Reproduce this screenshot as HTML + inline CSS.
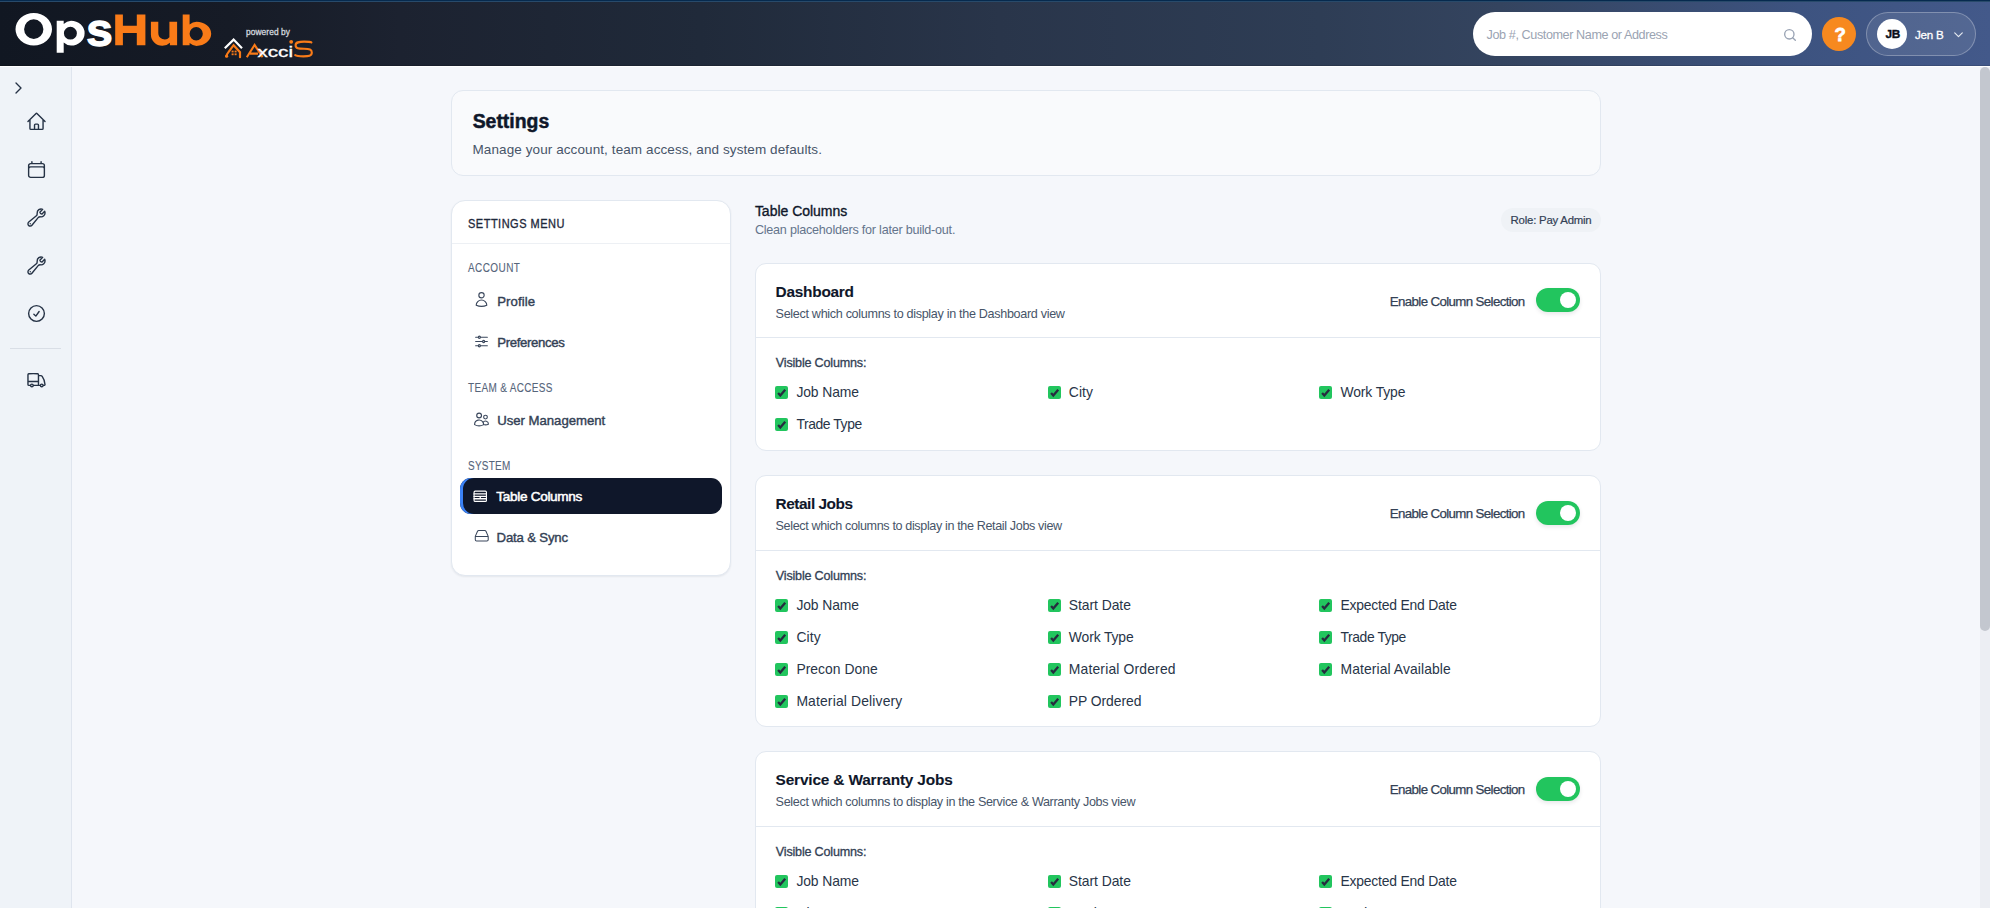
<!DOCTYPE html>
<html><head><meta charset="utf-8"><style>
*{box-sizing:border-box;margin:0;padding:0}
html,body{width:1990px;height:908px;overflow:hidden;background:#f5f7fb;font-family:"Liberation Sans",sans-serif;color:#0f172a}
.abs{position:absolute}
.t{position:absolute;line-height:1;white-space:nowrap}
svg.abs{display:block;overflow:visible}
#hdr{position:absolute;left:0;top:0;width:1990px;height:66px;
 background:linear-gradient(90deg,#111722 0px,#161b26 230px,#1c2230 400px,#202a3a 700px,#29354a 1000px,#2e3d55 1320px,#34445f 1500px,#3d5380 1800px,#43598a 1990px);
 border-bottom:1px solid rgba(0,0,0,.12)}
#tl0{position:absolute;left:0;top:0;width:1990px;height:1px;background:#062a4e}
#tl1{position:absolute;left:0;top:1px;width:1990px;height:1px;background:#284a6a}
#hline{position:absolute;left:0;top:66px;width:1990px;height:1px;background:#ffffff}
#side{position:absolute;left:0;top:67px;width:72px;height:841px;background:#eff3f8;border-right:1px solid #dfe5ee}
#sb{position:absolute;left:1980px;top:67px;width:10px;height:841px;background:#eceef3}
#sbt{position:absolute;left:1980px;top:67px;width:10px;height:564px;background:#c3c7cf;border-radius:5px}
.card{position:absolute;background:#fff;border:1px solid #e2e8f0}
.cb{position:absolute;width:13px;height:13px;background:#22c55e;border-radius:2px}
.cb svg{display:block}
</style></head><body>
<div id="hdr"></div><div id="tl0"></div><div id="tl1"></div><div id="hline"></div>
<svg class="abs" style="left:0;top:0" width="330" height="66" viewBox="0 0 330 66">
<path fill="#ffffff" fill-rule="evenodd" d="M15.5 29.3a18.25 16.3 0 1 0 36.5 0a18.25 16.3 0 1 0 -36.5 0z M24.1 29.15a9.65 9.85 0 1 0 19.3 0a9.65 9.85 0 1 0 -19.3 0z"/>
<path fill="#ffffff" fill-rule="evenodd" d="M56.7 20.7h7v3.2a12 12 0 0 1 7.3 -3.2a13.6 12.45 0 0 1 0 24.9a11 11 0 0 1 -7.3 -3v10.2h-7z M63.9 33.15a6.5 6.35 0 1 0 13 0a6.5 6.35 0 1 0 -13 0z"/>
<text x="86.2" y="45.5" font-family="Liberation Sans" font-weight="bold" font-size="45.5" fill="#ffffff" stroke="#ffffff" stroke-width="1.3" textLength="26.5" lengthAdjust="spacingAndGlyphs">s</text>
<path fill="#f97b18" d="M115.2 14.4h7.7v11.3h13.9v-11.3h8.6v30.9h-8.6v-12.4h-13.9v12.4h-7.7z"/>
<path fill="#f97b18" d="M150.9 21.8h7.4v11.2a6.3 6.5 0 0 0 11.1 4.2v-15.4h7.7v23.5h-7.2v-2.6a10.5 10.5 0 0 1 -7.6 3.1a11.3 11.3 0 0 1 -11.4 -11.3z"/>
<path fill="#f97b18" fill-rule="evenodd" d="M182.7 14.4h6.9v10.2a11.5 11.5 0 0 1 6.9 -2.8a14.7 12.05 0 0 1 0 24.1a11 11 0 0 1 -6.9 -2.8v2.2h-6.9z M189.6 33.85a6.6 6.75 0 1 0 13.2 0a6.6 6.75 0 1 0 -13.2 0z"/>
<text x="246" y="34.5" font-family="Liberation Sans" font-size="8.4" fill="#d0d5dd" stroke="#d0d5dd" stroke-width="0.3" textLength="44" lengthAdjust="spacing">powered by</text>
<path d="M224.8 48.2L233.6 39.6L242 48.2" fill="none" stroke="#ffffff" stroke-width="2.2" stroke-linejoin="miter"/>
<path d="M226.6 56.2C226.6 54.5 227.6 53.2 228.3 52.4L233.6 45.2L240 52.2V57.2" fill="none" stroke="#f97b18" stroke-width="2.2" stroke-linecap="round"/>
<circle cx="226.6" cy="56.2" r="1.6" fill="#f97b18"/>
<rect x="231.6" y="50.6" width="2" height="1.8" fill="#f97b18"/><rect x="234.6" y="50.6" width="2" height="1.8" fill="#f97b18"/>
<rect x="231.6" y="53.4" width="2" height="1.8" fill="#f97b18"/><rect x="234.6" y="53.4" width="2" height="1.8" fill="#f97b18"/>
<path d="M246.8 57.2L254.6 45L262.6 57.2M250 53.6H258" fill="none" stroke="#f97b18" stroke-width="2.1"/>
<text x="257.5" y="57.2" font-family="Liberation Sans" font-size="14.2" fill="#ffffff" stroke="#ffffff" stroke-width="0.3" textLength="35.5" lengthAdjust="spacingAndGlyphs">xcci</text>
<circle cx="291.2" cy="41.8" r="1.9" fill="#f97b18"/>
<path d="M311.4 42.4C310.2 41.6 308.4 41.6 304.2 41.6C298.6 41.6 295.6 42 295.6 45.2C295.6 48.6 298.6 48.8 304 48.8C309.6 48.8 311.8 49.4 311.8 52.6C311.8 56.2 308.6 56.4 303.4 56.4C298.8 56.4 296.6 56.2 295.2 55.2" fill="none" stroke="#f97b18" stroke-width="2.1" stroke-linecap="round"/>
</svg>
<div class="abs" style="left:1473px;top:12px;width:339px;height:44px;background:#fff;border-radius:22px"></div>
<div id="t1" class="t" style="left:1486.60px;top:28.88px;font-size:12.6px;font-weight:normal;color:#9aa3b2;letter-spacing:-0.4px;">Job #, Customer Name or Address</div>
<svg class="abs" style="left:1782px;top:27px" width="16" height="16" viewBox="0 0 24 24" fill="none" stroke="#98a2b3" stroke-width="2" stroke-linecap="round"><circle cx="11" cy="11" r="7"/><path d="M20 20l-4-4"/></svg>
<div class="abs" style="left:1822px;top:17px;width:34px;height:34px;border-radius:50%;background:#f7891f"></div>
<div id="t2" class="t" style="left:1834.50px;top:26.04px;font-size:18.5px;font-weight:bold;color:#ffffff;letter-spacing:0.0px;-webkit-text-stroke:0.8px #fff;">?</div>
<div class="abs" style="left:1866px;top:12px;width:110px;height:44px;border-radius:22px;background:rgba(255,255,255,0.09);border:1px solid rgba(255,255,255,0.28)"></div>
<div class="abs" style="left:1877px;top:19px;width:30px;height:30px;border-radius:50%;background:#fff"></div>
<div id="t3" class="t" style="left:1885.50px;top:29.21px;font-size:11.8px;font-weight:bold;color:#0b0f19;letter-spacing:-0.2px;-webkit-text-stroke:0.4px #0b0f19;">JB</div>
<div id="t4" class="t" style="left:1915.00px;top:28.74px;font-size:11.6px;font-weight:normal;color:#ffffff;letter-spacing:-0.25px;-webkit-text-stroke:0.3px #fff;">Jen B</div>
<svg class="abs" style="left:1952px;top:28px" width="13" height="13" viewBox="0 0 24 24" fill="none" stroke="#e5e9f0" stroke-width="2.2" stroke-linecap="round" stroke-linejoin="round"><path d="M5 9l7 7 7-7"/></svg>
<div id="side"></div>
<svg class="abs" style="left:10px;top:80px" width="16" height="16" viewBox="0 0 24 24" fill="none" stroke="#253245" stroke-width="1.6" stroke-linecap="round" stroke-linejoin="round"><path d="M9 4.5l7.5 7.5L9 19.5" stroke-width="2"/></svg>
<svg class="abs" style="left:25.5px;top:111.0px" width="21" height="21" viewBox="0 0 24 24" fill="none" stroke="#253245" stroke-width="1.6" stroke-linecap="round" stroke-linejoin="round"><path d="M2.25 12l8.954-8.955a1.126 1.126 0 011.591 0L21.75 12M4.5 9.75v10.125c0 .621.504 1.125 1.125 1.125H9.75v-4.875c0-.621.504-1.125 1.125-1.125h2.25c.621 0 1.125.504 1.125 1.125V21h4.125c.621 0 1.125-.504 1.125-1.125V9.75M8.25 21h8.25"/></svg>
<svg class="abs" style="left:25.5px;top:159.0px" width="21" height="21" viewBox="0 0 24 24" fill="none" stroke="#253245" stroke-width="1.6" stroke-linecap="round" stroke-linejoin="round"><path d="M6.75 3v2.25M17.25 3v2.25M3 18.75V7.5a2.25 2.25 0 012.25-2.25h13.5A2.25 2.25 0 0121 7.5v11.25m-18 0A2.25 2.25 0 005.25 21h13.5A2.25 2.25 0 0021 18.75m-18 0v-7.5A2.25 2.25 0 015.25 9h13.5A2.25 2.25 0 0121 11.25v7.5"/></svg>
<svg class="abs" style="left:25.5px;top:207.0px" width="21" height="21" viewBox="0 0 24 24" fill="none" stroke="#253245" stroke-width="1.6" stroke-linecap="round" stroke-linejoin="round"><path d="M21.75 6.75a4.5 4.5 0 01-4.884 4.484c-1.076-.091-2.264.071-2.95.904l-7.152 8.684a2.548 2.548 0 11-3.586-3.586l8.684-7.152c.833-.686.995-1.874.904-2.95a4.5 4.5 0 016.336-4.486l-3.276 3.276a3.004 3.004 0 002.25 2.25l3.276-3.276c.256.565.398 1.192.398 1.852z"/><path d="M4.867 19.125h.008v.008h-.008v-.008z"/></svg>
<svg class="abs" style="left:25.5px;top:255.0px" width="21" height="21" viewBox="0 0 24 24" fill="none" stroke="#253245" stroke-width="1.6" stroke-linecap="round" stroke-linejoin="round"><path d="M21.75 6.75a4.5 4.5 0 01-4.884 4.484c-1.076-.091-2.264.071-2.95.904l-7.152 8.684a2.548 2.548 0 11-3.586-3.586l8.684-7.152c.833-.686.995-1.874.904-2.95a4.5 4.5 0 016.336-4.486l-3.276 3.276a3.004 3.004 0 002.25 2.25l3.276-3.276c.256.565.398 1.192.398 1.852z"/><path d="M4.867 19.125h.008v.008h-.008v-.008z"/></svg>
<svg class="abs" style="left:25.5px;top:302.5px" width="21" height="21" viewBox="0 0 24 24" fill="none" stroke="#253245" stroke-width="1.6" stroke-linecap="round" stroke-linejoin="round"><path d="M9 12.75L11.25 15 15 9.75M21 12a9 9 0 11-18 0 9 9 0 0118 0z"/></svg>
<div class="abs" style="left:10px;top:348px;width:51px;height:1px;background:#d9dee6"></div>
<svg class="abs" style="left:25.5px;top:368.5px" width="21" height="21" viewBox="0 0 24 24" fill="none" stroke="#253245" stroke-width="1.6" stroke-linecap="round" stroke-linejoin="round"><path d="M8.25 18.75a1.5 1.5 0 01-3 0m3 0a1.5 1.5 0 00-3 0m3 0h6m-9 0H3.375a1.125 1.125 0 01-1.125-1.125V14.25m17.25 4.5a1.5 1.5 0 01-3 0m3 0a1.5 1.5 0 00-3 0m3 0h1.125c.621 0 1.129-.504 1.09-1.124a17.902 17.902 0 00-3.213-9.193 2.056 2.056 0 00-1.58-.86H14.25M16.5 18.75h-2.25m0-11.177v-.958c0-.568-.422-1.048-.987-1.106a48.554 48.554 0 00-10.026 0 1.106 1.106 0 00-.987 1.106v7.635m12-6.677v6.677m0 4.5v-4.5m0 0h-12"/></svg>
<div id="sb"></div><div id="sbt"></div>
<div class="card" style="left:451px;top:90px;width:1150px;height:86px;background:#f9fafc;border-radius:12px"></div>
<div id="t5" class="t" style="left:472.70px;top:112.40px;font-size:19.4px;font-weight:bold;color:#0f172a;letter-spacing:0.0px;-webkit-text-stroke:0.5px currentColor;">Settings</div>
<div id="t6" class="t" style="left:472.50px;top:143.04px;font-size:13.5px;font-weight:normal;color:#475569;letter-spacing:0.094px;">Manage your account, team access, and system defaults.</div>
<div class="card" style="left:451px;top:200px;width:280px;height:376px;border-radius:14px;box-shadow:0 1px 2px rgba(15,23,42,.07)"></div>
<div class="abs" style="left:452px;top:243px;width:278px;height:1px;background:#edf0f4"></div>
<div id="t7" class="t" style="left:468.30px;top:216.90px;font-size:13.1px;font-weight:normal;color:#1e293b;letter-spacing:0.597px;transform:scaleX(0.84);transform-origin:0 0;-webkit-text-stroke:0.35px currentColor;">SETTINGS MENU</div>
<div id="t8" class="t" style="left:468.30px;top:262.70px;font-size:11.9px;font-weight:normal;color:#56657b;letter-spacing:0.498px;transform:scaleX(0.84);transform-origin:0 0;-webkit-text-stroke:0.1px currentColor;">ACCOUNT</div>
<div id="t9" class="t" style="left:497.20px;top:295.09px;font-size:13.2px;font-weight:normal;color:#334155;letter-spacing:0.066px;-webkit-text-stroke:0.4px currentColor;">Profile</div>
<div id="t10" class="t" style="left:497.20px;top:336.09px;font-size:13.2px;font-weight:normal;color:#334155;letter-spacing:-0.35px;-webkit-text-stroke:0.4px currentColor;">Preferences</div>
<div id="t11" class="t" style="left:467.90px;top:382.80px;font-size:11.9px;font-weight:normal;color:#56657b;letter-spacing:0.399px;transform:scaleX(0.84);transform-origin:0 0;-webkit-text-stroke:0.1px currentColor;">TEAM &amp; ACCESS</div>
<div id="t12" class="t" style="left:497.20px;top:414.09px;font-size:13.2px;font-weight:normal;color:#334155;letter-spacing:-0.029px;-webkit-text-stroke:0.4px currentColor;">User Management</div>
<div id="t13" class="t" style="left:467.70px;top:460.80px;font-size:11.9px;font-weight:normal;color:#56657b;letter-spacing:0.3px;transform:scaleX(0.84);transform-origin:0 0;-webkit-text-stroke:0.1px currentColor;">SYSTEM</div>
<div class="abs" style="left:460px;top:478px;width:262px;height:36px;border-radius:11px;background:#0f172a;box-shadow:inset 3px 0 0 #3b82f6"></div>
<div id="t14" class="t" style="left:496.30px;top:490.02px;font-size:13.6px;font-weight:normal;color:#ffffff;letter-spacing:-0.317px;-webkit-text-stroke:0.5px #fff;">Table Columns</div>
<div id="t15" class="t" style="left:496.60px;top:531.09px;font-size:13.2px;font-weight:normal;color:#334155;letter-spacing:-0.18px;-webkit-text-stroke:0.4px currentColor;">Data &amp; Sync</div>
<svg class="abs" style="left:472.5px;top:290.5px" width="17" height="17" viewBox="0 0 24 24" fill="none" stroke="#3a475c" stroke-width="1.6" stroke-linecap="round" stroke-linejoin="round"><path d="M15.75 6a3.75 3.75 0 11-7.5 0 3.75 3.75 0 017.5 0zM4.501 20.118a7.5 7.5 0 0114.998 0A17.933 17.933 0 0112 21.75c-2.676 0-5.216-.584-7.499-1.632z"/></svg>
<svg class="abs" style="left:472.5px;top:333.0px" width="17" height="17" viewBox="0 0 24 24" fill="none" stroke="#3a475c" stroke-width="1.6" stroke-linecap="round" stroke-linejoin="round"><path d="M10.5 6h9.75M10.5 6a1.5 1.5 0 11-3 0m3 0a1.5 1.5 0 10-3 0M3.75 6H7.5m3 12h9.75m-9.75 0a1.5 1.5 0 01-3 0m3 0a1.5 1.5 0 00-3 0m-3.75 0H7.5m9-6h3.75m-3.75 0a1.5 1.5 0 01-3 0m3 0a1.5 1.5 0 00-3 0m-9.75 0h9.75"/></svg>
<svg class="abs" style="left:472.5px;top:411.0px" width="17" height="17" viewBox="0 0 24 24" fill="none" stroke="#3a475c" stroke-width="1.6" stroke-linecap="round" stroke-linejoin="round"><path d="M15 19.128a9.38 9.38 0 002.625.372 9.337 9.337 0 004.121-.952 4.125 4.125 0 00-7.533-2.493M15 19.128v-.003c0-1.113-.285-2.16-.786-3.07M15 19.128v.106A12.318 12.318 0 018.624 21c-2.331 0-4.512-.645-6.374-1.766l-.001-.109a6.375 6.375 0 0111.964-3.07M12 6.375a3.375 3.375 0 11-6.75 0 3.375 3.375 0 016.75 0zm8.25 2.25a2.625 2.625 0 11-5.25 0 2.625 2.625 0 015.25 0z"/></svg>
<svg class="abs" style="left:471.95px;top:487.75px" width="16.5" height="16.5" viewBox="0 0 24 24" fill="none" stroke="#ffffff" stroke-width="1.6" stroke-linecap="round" stroke-linejoin="round"><rect x="3" y="4.5" width="18" height="15" rx="1.5"/><path d="M3 8.6h18M3 12.2h18M3 15.6h18M12 12.2v3.4" stroke-width="1.9"/></svg>
<svg class="abs" style="left:473.55px;top:528.45px" width="15.5" height="15.5" viewBox="0 0 24 24" fill="none" stroke="#3a475c" stroke-width="1.6" stroke-linecap="round" stroke-linejoin="round"><path d="M22 13H2M5.45 5.11L2 13v5a2 2 0 002 2h16a2 2 0 002-2v-5l-3.45-7.89A2 2 0 0016.76 4H7.24a2 2 0 00-1.79 1.11z"/></svg>
<div id="t16" class="t" style="left:754.90px;top:204.16px;font-size:14px;font-weight:normal;color:#0f172a;letter-spacing:-0.018px;-webkit-text-stroke:0.35px currentColor;">Table Columns</div>
<div id="t17" class="t" style="left:754.90px;top:224.28px;font-size:12.6px;font-weight:normal;color:#64748b;letter-spacing:-0.232px;">Clean placeholders for later build-out.</div>
<div class="abs" style="left:1501px;top:208px;width:100px;height:24px;border-radius:12px;background:#eff2f6"></div>
<div id="t18" class="t" style="left:1510.60px;top:214.58px;font-size:11.4px;font-weight:normal;color:#334155;letter-spacing:-0.221px;-webkit-text-stroke:0.2px currentColor;">Role: Pay Admin</div>
<div class="card" style="left:755px;top:263px;width:846px;height:188px;border-radius:11px"></div>
<div class="abs" style="left:756px;top:337px;width:844px;height:1px;background:#e2e8f0"></div>
<div id="t19" class="t" style="left:775.60px;top:284.34px;font-size:15.4px;font-weight:bold;color:#0f172a;letter-spacing:-0.25px;-webkit-text-stroke:0.1px currentColor;">Dashboard</div>
<div id="t20" class="t" style="left:775.60px;top:307.68px;font-size:12.6px;font-weight:normal;color:#475569;letter-spacing:-0.319px;">Select which columns to display in the Dashboard view</div>
<div id="t21" class="t" style="left:1389.80px;top:294.57px;font-size:13.3px;font-weight:normal;color:#334155;letter-spacing:-0.632px;-webkit-text-stroke:0.25px currentColor;">Enable Column Selection</div>
<div class="abs" style="left:1536px;top:288px;width:44px;height:24px;border-radius:12px;background:#22c55e;box-shadow:0 2px 4px rgba(15,23,42,.10)"></div>
<div class="abs" style="left:1560px;top:292px;width:16px;height:16px;border-radius:50%;background:#fff"></div>
<div id="t22" class="t" style="left:775.80px;top:357.28px;font-size:12.6px;font-weight:normal;color:#334155;letter-spacing:-0.194px;-webkit-text-stroke:0.3px currentColor;">Visible Columns:</div>
<div class="cb" style="left:775.2px;top:386.2px"><svg width="13" height="13" viewBox="0 0 13 13"><path d="M3.1 7.1l2.2 2.5L10.2 3.8" fill="none" stroke="#262b3f" stroke-width="2.3" stroke-linecap="butt" stroke-linejoin="miter"/></svg></div>
<div id="t23" class="t" style="left:796.40px;top:385.88px;font-size:13.9px;font-weight:normal;color:#283548;letter-spacing:-0.1px;">Job Name</div>
<div class="cb" style="left:1047.6px;top:386.2px"><svg width="13" height="13" viewBox="0 0 13 13"><path d="M3.1 7.1l2.2 2.5L10.2 3.8" fill="none" stroke="#262b3f" stroke-width="2.3" stroke-linecap="butt" stroke-linejoin="miter"/></svg></div>
<div id="t24" class="t" style="left:1068.80px;top:385.88px;font-size:13.9px;font-weight:normal;color:#283548;letter-spacing:0.098px;">City</div>
<div class="cb" style="left:1319.3px;top:386.2px"><svg width="13" height="13" viewBox="0 0 13 13"><path d="M3.1 7.1l2.2 2.5L10.2 3.8" fill="none" stroke="#262b3f" stroke-width="2.3" stroke-linecap="butt" stroke-linejoin="miter"/></svg></div>
<div id="t25" class="t" style="left:1340.50px;top:385.88px;font-size:13.9px;font-weight:normal;color:#283548;letter-spacing:-0.125px;">Work Type</div>
<div class="cb" style="left:775.2px;top:418.2px"><svg width="13" height="13" viewBox="0 0 13 13"><path d="M3.1 7.1l2.2 2.5L10.2 3.8" fill="none" stroke="#262b3f" stroke-width="2.3" stroke-linecap="butt" stroke-linejoin="miter"/></svg></div>
<div id="t26" class="t" style="left:796.40px;top:417.88px;font-size:13.9px;font-weight:normal;color:#283548;letter-spacing:-0.412px;">Trade Type</div>
<div class="card" style="left:755px;top:475px;width:846px;height:252px;border-radius:11px"></div>
<div class="abs" style="left:756px;top:550px;width:844px;height:1px;background:#e2e8f0"></div>
<div id="t27" class="t" style="left:775.60px;top:496.34px;font-size:15.4px;font-weight:bold;color:#0f172a;letter-spacing:-0.47px;-webkit-text-stroke:0.1px currentColor;">Retail Jobs</div>
<div id="t28" class="t" style="left:775.60px;top:519.68px;font-size:12.6px;font-weight:normal;color:#475569;letter-spacing:-0.371px;">Select which columns to display in the Retail Jobs view</div>
<div id="t29" class="t" style="left:1389.80px;top:506.57px;font-size:13.3px;font-weight:normal;color:#334155;letter-spacing:-0.632px;-webkit-text-stroke:0.25px currentColor;">Enable Column Selection</div>
<div class="abs" style="left:1536px;top:501px;width:44px;height:24px;border-radius:12px;background:#22c55e;box-shadow:0 2px 4px rgba(15,23,42,.10)"></div>
<div class="abs" style="left:1560px;top:505px;width:16px;height:16px;border-radius:50%;background:#fff"></div>
<div id="t30" class="t" style="left:775.80px;top:570.28px;font-size:12.6px;font-weight:normal;color:#334155;letter-spacing:-0.194px;-webkit-text-stroke:0.3px currentColor;">Visible Columns:</div>
<div class="cb" style="left:775.2px;top:599.2px"><svg width="13" height="13" viewBox="0 0 13 13"><path d="M3.1 7.1l2.2 2.5L10.2 3.8" fill="none" stroke="#262b3f" stroke-width="2.3" stroke-linecap="butt" stroke-linejoin="miter"/></svg></div>
<div id="t31" class="t" style="left:796.40px;top:598.88px;font-size:13.9px;font-weight:normal;color:#283548;letter-spacing:-0.1px;">Job Name</div>
<div class="cb" style="left:1047.6px;top:599.2px"><svg width="13" height="13" viewBox="0 0 13 13"><path d="M3.1 7.1l2.2 2.5L10.2 3.8" fill="none" stroke="#262b3f" stroke-width="2.3" stroke-linecap="butt" stroke-linejoin="miter"/></svg></div>
<div id="t32" class="t" style="left:1068.80px;top:598.88px;font-size:13.9px;font-weight:normal;color:#283548;letter-spacing:-0.052px;">Start Date</div>
<div class="cb" style="left:1319.3px;top:599.2px"><svg width="13" height="13" viewBox="0 0 13 13"><path d="M3.1 7.1l2.2 2.5L10.2 3.8" fill="none" stroke="#262b3f" stroke-width="2.3" stroke-linecap="butt" stroke-linejoin="miter"/></svg></div>
<div id="t33" class="t" style="left:1340.50px;top:598.88px;font-size:13.9px;font-weight:normal;color:#283548;letter-spacing:-0.201px;">Expected End Date</div>
<div class="cb" style="left:775.2px;top:631.2px"><svg width="13" height="13" viewBox="0 0 13 13"><path d="M3.1 7.1l2.2 2.5L10.2 3.8" fill="none" stroke="#262b3f" stroke-width="2.3" stroke-linecap="butt" stroke-linejoin="miter"/></svg></div>
<div id="t34" class="t" style="left:796.40px;top:630.88px;font-size:13.9px;font-weight:normal;color:#283548;letter-spacing:0.098px;">City</div>
<div class="cb" style="left:1047.6px;top:631.2px"><svg width="13" height="13" viewBox="0 0 13 13"><path d="M3.1 7.1l2.2 2.5L10.2 3.8" fill="none" stroke="#262b3f" stroke-width="2.3" stroke-linecap="butt" stroke-linejoin="miter"/></svg></div>
<div id="t35" class="t" style="left:1068.80px;top:630.88px;font-size:13.9px;font-weight:normal;color:#283548;letter-spacing:-0.125px;">Work Type</div>
<div class="cb" style="left:1319.3px;top:631.2px"><svg width="13" height="13" viewBox="0 0 13 13"><path d="M3.1 7.1l2.2 2.5L10.2 3.8" fill="none" stroke="#262b3f" stroke-width="2.3" stroke-linecap="butt" stroke-linejoin="miter"/></svg></div>
<div id="t36" class="t" style="left:1340.50px;top:630.88px;font-size:13.9px;font-weight:normal;color:#283548;letter-spacing:-0.412px;">Trade Type</div>
<div class="cb" style="left:775.2px;top:663.2px"><svg width="13" height="13" viewBox="0 0 13 13"><path d="M3.1 7.1l2.2 2.5L10.2 3.8" fill="none" stroke="#262b3f" stroke-width="2.3" stroke-linecap="butt" stroke-linejoin="miter"/></svg></div>
<div id="t37" class="t" style="left:796.40px;top:662.88px;font-size:13.9px;font-weight:normal;color:#283548;letter-spacing:0.02px;">Precon Done</div>
<div class="cb" style="left:1047.6px;top:663.2px"><svg width="13" height="13" viewBox="0 0 13 13"><path d="M3.1 7.1l2.2 2.5L10.2 3.8" fill="none" stroke="#262b3f" stroke-width="2.3" stroke-linecap="butt" stroke-linejoin="miter"/></svg></div>
<div id="t38" class="t" style="left:1068.80px;top:662.88px;font-size:13.9px;font-weight:normal;color:#283548;letter-spacing:0.167px;">Material Ordered</div>
<div class="cb" style="left:1319.3px;top:663.2px"><svg width="13" height="13" viewBox="0 0 13 13"><path d="M3.1 7.1l2.2 2.5L10.2 3.8" fill="none" stroke="#262b3f" stroke-width="2.3" stroke-linecap="butt" stroke-linejoin="miter"/></svg></div>
<div id="t39" class="t" style="left:1340.50px;top:662.88px;font-size:13.9px;font-weight:normal;color:#283548;letter-spacing:0.097px;">Material Available</div>
<div class="cb" style="left:775.2px;top:695.2px"><svg width="13" height="13" viewBox="0 0 13 13"><path d="M3.1 7.1l2.2 2.5L10.2 3.8" fill="none" stroke="#262b3f" stroke-width="2.3" stroke-linecap="butt" stroke-linejoin="miter"/></svg></div>
<div id="t40" class="t" style="left:796.40px;top:694.88px;font-size:13.9px;font-weight:normal;color:#283548;letter-spacing:0.15px;">Material Delivery</div>
<div class="cb" style="left:1047.6px;top:695.2px"><svg width="13" height="13" viewBox="0 0 13 13"><path d="M3.1 7.1l2.2 2.5L10.2 3.8" fill="none" stroke="#262b3f" stroke-width="2.3" stroke-linecap="butt" stroke-linejoin="miter"/></svg></div>
<div id="t41" class="t" style="left:1068.80px;top:694.88px;font-size:13.9px;font-weight:normal;color:#283548;letter-spacing:-0.058px;">PP Ordered</div>
<div class="card" style="left:755px;top:751px;width:846px;height:220px;border-radius:11px"></div>
<div class="abs" style="left:756px;top:826px;width:844px;height:1px;background:#e2e8f0"></div>
<div id="t42" class="t" style="left:775.60px;top:772.34px;font-size:15.4px;font-weight:bold;color:#0f172a;letter-spacing:-0.162px;-webkit-text-stroke:0.1px currentColor;">Service &amp; Warranty Jobs</div>
<div id="t43" class="t" style="left:775.60px;top:795.68px;font-size:12.6px;font-weight:normal;color:#475569;letter-spacing:-0.341px;">Select which columns to display in the Service &amp; Warranty Jobs view</div>
<div id="t44" class="t" style="left:1389.80px;top:782.57px;font-size:13.3px;font-weight:normal;color:#334155;letter-spacing:-0.632px;-webkit-text-stroke:0.25px currentColor;">Enable Column Selection</div>
<div class="abs" style="left:1536px;top:777px;width:44px;height:24px;border-radius:12px;background:#22c55e;box-shadow:0 2px 4px rgba(15,23,42,.10)"></div>
<div class="abs" style="left:1560px;top:781px;width:16px;height:16px;border-radius:50%;background:#fff"></div>
<div id="t45" class="t" style="left:775.80px;top:846.28px;font-size:12.6px;font-weight:normal;color:#334155;letter-spacing:-0.194px;-webkit-text-stroke:0.3px currentColor;">Visible Columns:</div>
<div class="cb" style="left:775.2px;top:875.2px"><svg width="13" height="13" viewBox="0 0 13 13"><path d="M3.1 7.1l2.2 2.5L10.2 3.8" fill="none" stroke="#262b3f" stroke-width="2.3" stroke-linecap="butt" stroke-linejoin="miter"/></svg></div>
<div id="t46" class="t" style="left:796.40px;top:874.88px;font-size:13.9px;font-weight:normal;color:#283548;letter-spacing:-0.1px;">Job Name</div>
<div class="cb" style="left:1047.6px;top:875.2px"><svg width="13" height="13" viewBox="0 0 13 13"><path d="M3.1 7.1l2.2 2.5L10.2 3.8" fill="none" stroke="#262b3f" stroke-width="2.3" stroke-linecap="butt" stroke-linejoin="miter"/></svg></div>
<div id="t47" class="t" style="left:1068.80px;top:874.88px;font-size:13.9px;font-weight:normal;color:#283548;letter-spacing:-0.052px;">Start Date</div>
<div class="cb" style="left:1319.3px;top:875.2px"><svg width="13" height="13" viewBox="0 0 13 13"><path d="M3.1 7.1l2.2 2.5L10.2 3.8" fill="none" stroke="#262b3f" stroke-width="2.3" stroke-linecap="butt" stroke-linejoin="miter"/></svg></div>
<div id="t48" class="t" style="left:1340.50px;top:874.88px;font-size:13.9px;font-weight:normal;color:#283548;letter-spacing:-0.201px;">Expected End Date</div>
<div class="cb" style="left:775.2px;top:907.2px"><svg width="13" height="13" viewBox="0 0 13 13"><path d="M3.1 7.1l2.2 2.5L10.2 3.8" fill="none" stroke="#262b3f" stroke-width="2.3" stroke-linecap="butt" stroke-linejoin="miter"/></svg></div>
<div id="t49" class="t" style="left:796.40px;top:906.88px;font-size:13.9px;font-weight:normal;color:#283548;letter-spacing:0.098px;">City</div>
<div class="cb" style="left:1047.6px;top:907.2px"><svg width="13" height="13" viewBox="0 0 13 13"><path d="M3.1 7.1l2.2 2.5L10.2 3.8" fill="none" stroke="#262b3f" stroke-width="2.3" stroke-linecap="butt" stroke-linejoin="miter"/></svg></div>
<div id="t50" class="t" style="left:1068.80px;top:906.88px;font-size:13.9px;font-weight:normal;color:#283548;letter-spacing:-0.125px;">Work Type</div>
<div class="cb" style="left:1319.3px;top:907.2px"><svg width="13" height="13" viewBox="0 0 13 13"><path d="M3.1 7.1l2.2 2.5L10.2 3.8" fill="none" stroke="#262b3f" stroke-width="2.3" stroke-linecap="butt" stroke-linejoin="miter"/></svg></div>
<div id="t51" class="t" style="left:1340.50px;top:906.88px;font-size:13.9px;font-weight:normal;color:#283548;letter-spacing:-0.412px;">Trade Type</div>
<div class="cb" style="left:775.2px;top:939.2px"><svg width="13" height="13" viewBox="0 0 13 13"><path d="M3.1 7.1l2.2 2.5L10.2 3.8" fill="none" stroke="#262b3f" stroke-width="2.3" stroke-linecap="butt" stroke-linejoin="miter"/></svg></div>
<div id="t52" class="t" style="left:796.40px;top:938.88px;font-size:13.9px;font-weight:normal;color:#283548;letter-spacing:0.02px;">Precon Done</div>
<div class="cb" style="left:1047.6px;top:939.2px"><svg width="13" height="13" viewBox="0 0 13 13"><path d="M3.1 7.1l2.2 2.5L10.2 3.8" fill="none" stroke="#262b3f" stroke-width="2.3" stroke-linecap="butt" stroke-linejoin="miter"/></svg></div>
<div id="t53" class="t" style="left:1068.80px;top:938.88px;font-size:13.9px;font-weight:normal;color:#283548;letter-spacing:0.167px;">Material Ordered</div>
<div class="cb" style="left:1319.3px;top:939.2px"><svg width="13" height="13" viewBox="0 0 13 13"><path d="M3.1 7.1l2.2 2.5L10.2 3.8" fill="none" stroke="#262b3f" stroke-width="2.3" stroke-linecap="butt" stroke-linejoin="miter"/></svg></div>
<div id="t54" class="t" style="left:1340.50px;top:938.88px;font-size:13.9px;font-weight:normal;color:#283548;letter-spacing:0.097px;">Material Available</div>
</body></html>
